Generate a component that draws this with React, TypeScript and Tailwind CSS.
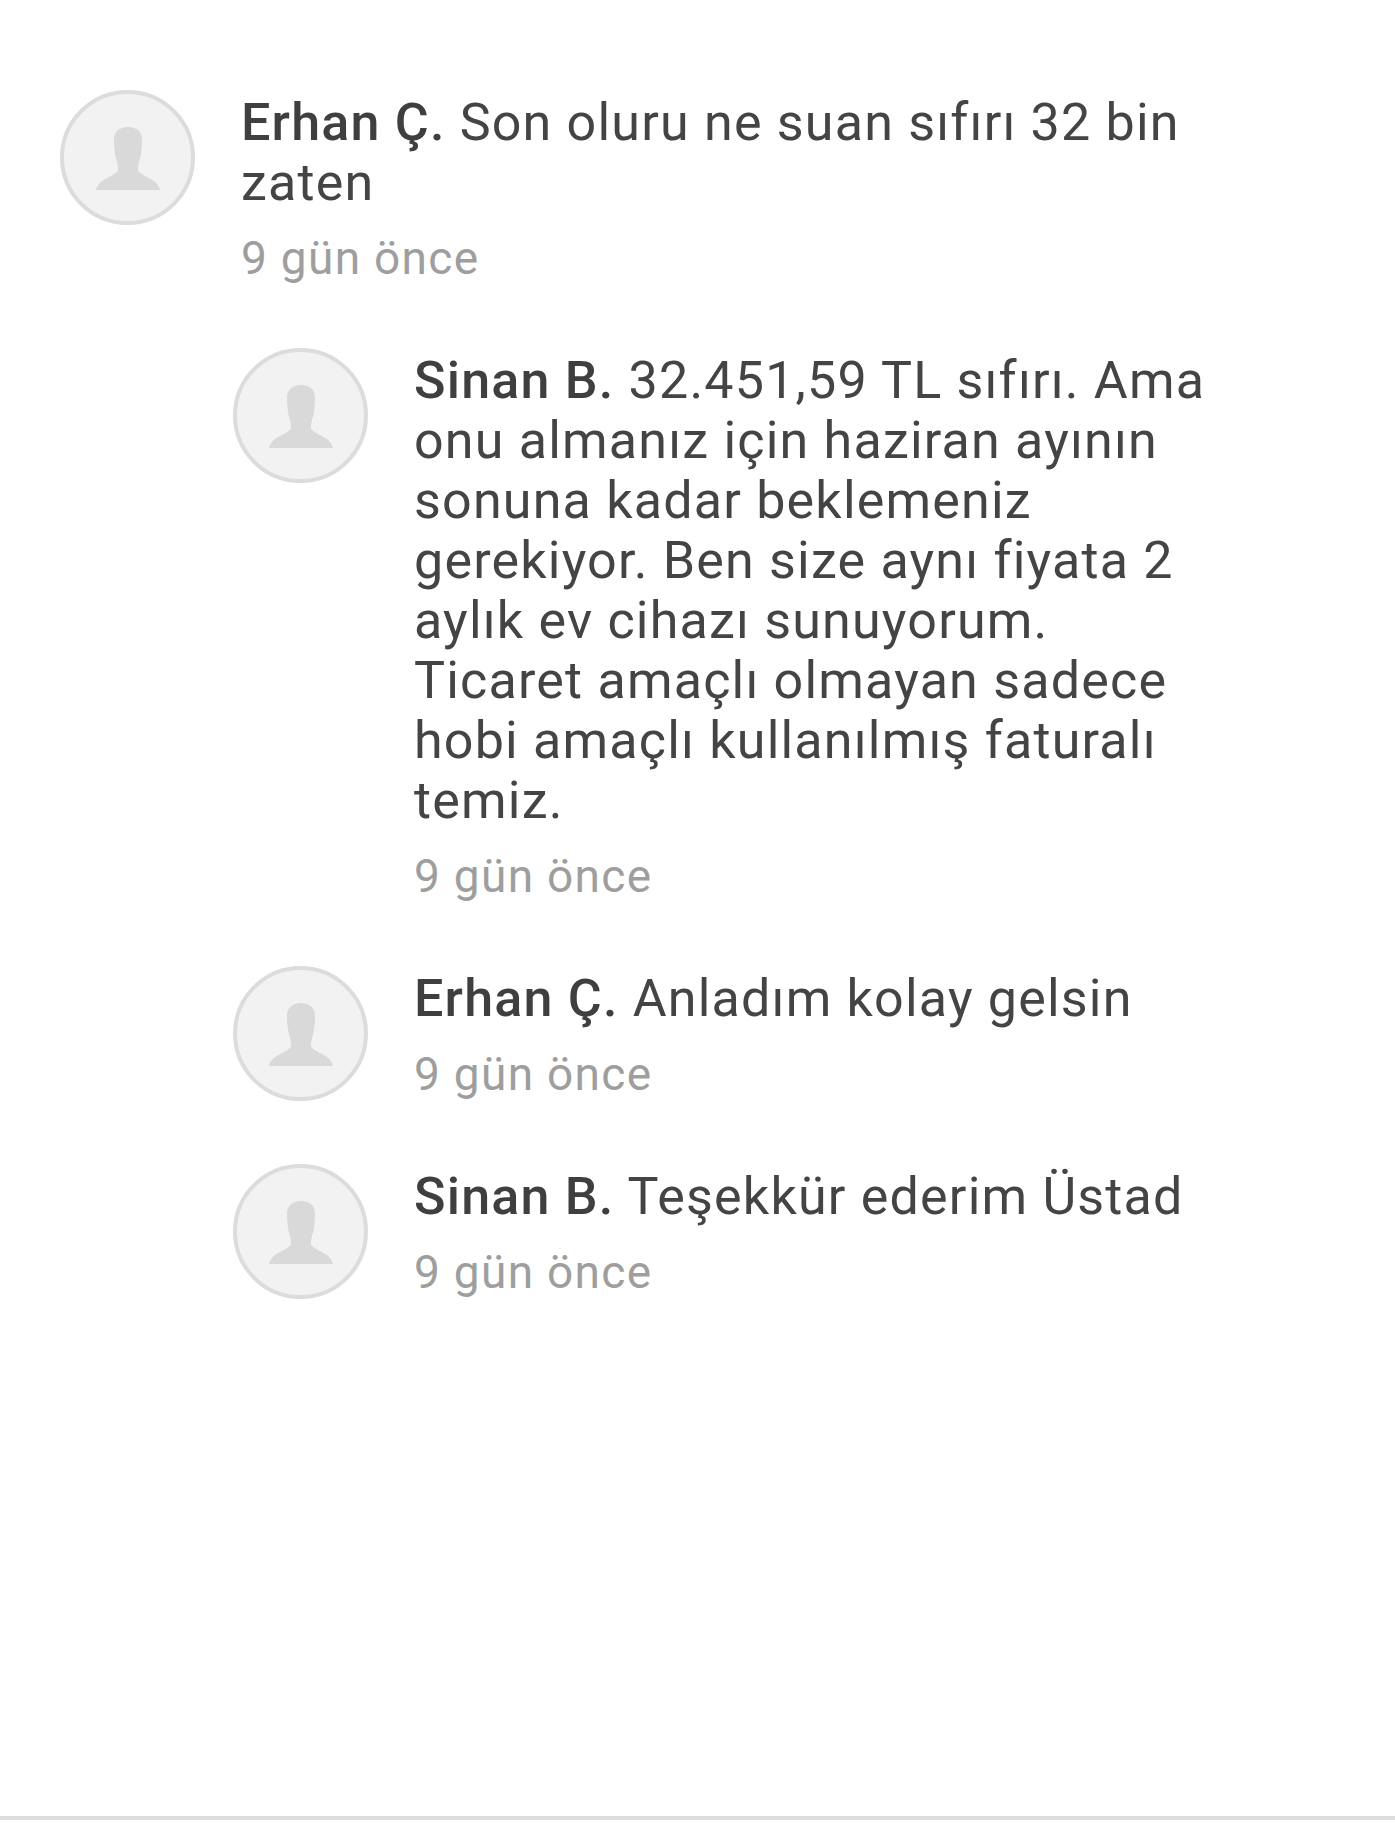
import React from "react";

function Avatar() {
  return (
    <div className="w-[135px] h-[135px] shrink-0 rounded-full border-[4px] border-[#dcdcdc] bg-[#f2f2f2] flex items-center justify-center">
      <svg width="64" height="63" viewBox="0 0 64 63" fill="#d9d9d9" className="mt-[2px]">
        <path d="M32 0c-9 0-14 5-14 13 0 8 1 16 3 22 1 3 1 5 1 8 0 2-5 5-11 8C5 54 1 58 0 63h64c-1-5-5-9-11-12-6-3-11-6-11-8 0-3 0-5 1-8 2-6 3-14 3-22 0-8-5-13-14-13z" />
      </svg>
    </div>
  );
}

function Comment({ name, text, cls }: { name: string; text: string; cls: string }) {
  return (
    <div className={"flex gap-[46px] " + cls}>
      <Avatar />
      <div className="flex-1 pt-[3px]">
        <p className="text-[52px] leading-[60px] text-[#444444] tracking-[1.2px]">
          <span className="font-medium text-[#3f3f3f]">{name}</span> {text}
        </p>
        <p className="mt-[15px] text-[46px] leading-[60px] text-[#9e9e9e] tracking-[1.3px]">9 gün önce</p>
      </div>
    </div>
  );
}

export default function App() {
  return (
    <div className="w-[1395px] h-[1832px] bg-white flex flex-col font-['Roboto',sans-serif]">
      <div className="flex-1 pt-[90px] pl-[60px] pr-[180px]">
        <Comment name="Erhan Ç." text="Son oluru ne suan sıfırı 32 bin zaten" cls="" />
        <div className="pl-[173px]">
          <Comment name="Sinan B." text="32.451,59 TL sıfırı. Ama onu almanız için haziran ayının sonuna kadar beklemeniz gerekiyor. Ben size aynı fiyata 2 aylık ev cihazı sunuyorum. Ticaret amaçlı olmayan sadece hobi amaçlı kullanılmış faturalı temiz." cls="mt-[60px]" />
          <Comment name="Erhan Ç." text="Anladım kolay gelsin" cls="mt-[60px]" />
          <Comment name="Sinan B." text="Teşekkür ederim Üstad" cls="mt-[60px]" />
        </div>
      </div>
      <div className="h-[4px] bg-[#dcdedd] mb-[12px]" />
    </div>
  );
}
